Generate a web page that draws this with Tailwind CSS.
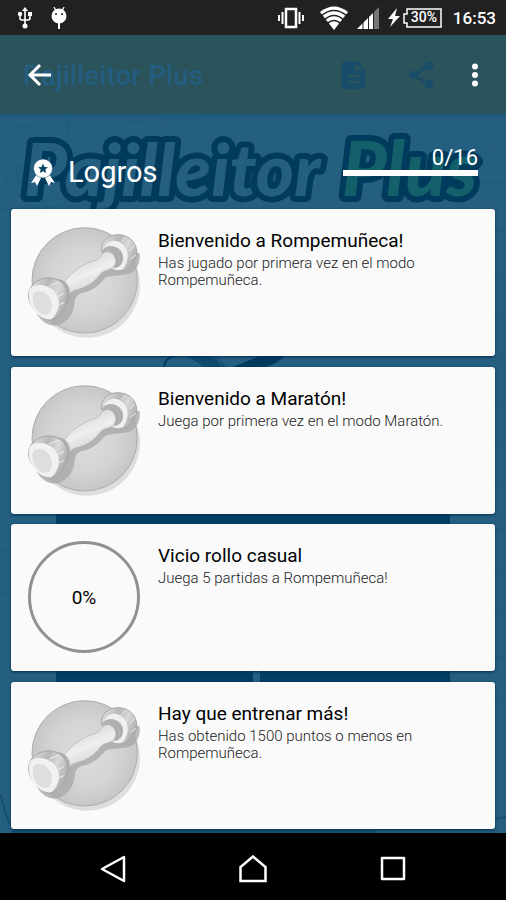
<!DOCTYPE html>
<html lang="es">
<head>
<meta charset="utf-8">
<meta name="viewport" content="width=device-width, initial-scale=1">
<title>Logros</title>
<script src="https://cdn.jsdelivr.net/npm/@tailwindcss/browser@4"></script>
</head>
<body class="bg-black font-[Roboto,sans-serif]">

<!-- Shared dumbbell badge -->
<svg class="absolute size-0" aria-hidden="true">
  <defs>
    <radialGradient id="disc" cx=".5" cy=".5" r=".55">
      <stop offset="0" stop-color="#dedede"/><stop offset=".6" stop-color="#d3d3d3"/><stop offset="1" stop-color="#c3c3c3"/>
    </radialGradient>
    <linearGradient id="metal" x1="0" y1="0" x2="1" y2=".5">
      <stop offset="0" stop-color="#e8e8e8"/><stop offset=".45" stop-color="#b8b8b8"/><stop offset=".7" stop-color="#d9d9d9"/><stop offset="1" stop-color="#b0b0b0"/>
    </linearGradient>
    <linearGradient id="grip" x1=".35" y1=".2" x2=".65" y2=".8">
      <stop offset="0" stop-color="#dcdcdc"/><stop offset=".5" stop-color="#efefef"/><stop offset="1" stop-color="#d8d8d8"/>
    </linearGradient>
  </defs>
  <symbol id="dumbbell" viewBox="54 33 336 336">
    <circle cx="231" cy="209" r="159" fill="#dedede"/>
    <circle cx="224" cy="196" r="158" fill="url(#disc)" stroke="#adadad" stroke-width="3"/>
    <path d="M80 295C95 325 125 340 155 326C180 313 192 290 194 262C196 245 204 238 216 234C250 228 270 206 286 188C302 182 330 182 350 178C375 174 392 150 389 116L340 90L180 190L90 270Z" fill="#a9a9a9" fill-opacity=".8"/>
    <path d="M274 108C272 78 296 58 326 59C358 60 381 84 380 112C379 142 358 167 328 168C306 167 300 158 300 145Z" fill="url(#metal)" stroke="#a9a9a9" stroke-width="3"/>
    <path d="M282 98C292 76 318 70 338 88C358 106 358 140 338 163C326 167 312 166 304 158C334 158 348 130 334 110C320 92 300 88 282 98Z" fill="#f0f0f0"/>
    <path d="M275 110C286 88 316 90 331 106C347 126 339 152 318 159C308 158 304 150 300 142Z" fill="#b2b2b2"/>
    <path d="M303 103C320 116 328 134 320 155M312 98C332 112 338 132 330 151" fill="none" stroke="#a0a0a0" stroke-width="2"/>
    <path d="M349 66L334 81M374 91L359 108M378 121L361 132" stroke="#ececec" stroke-width="3"/>
    <path d="M128 198C148 186 174 203 181 220C184 244 178 260 162 274Z" fill="#b0b0b0" stroke="#a1a1a1" stroke-width="2"/>
    <path d="M164 200C181 176 204 158 230 146C248 138 264 137 271 126C276 111 293 105 306 115C321 128 321 149 306 160C290 167 278 167 268 181C250 204 229 216 205 223C192 226 184 230 179 236C180 220 174 208 164 200Z" fill="url(#grip)" stroke="#b4b4b4" stroke-width="2"/>
    <path d="M68 209C88 191 110 184 134 191C156 197 174 218 173 246C172 278 151 306 123 314C101 317 62 285 56 247C55 232 59 218 68 209Z" fill="url(#metal)" stroke="#a5a5a5" stroke-width="3"/>
    <path d="M60 220C82 203 116 209 135 231C153 254 151 287 125 313C91 317 59 281 57 247C56 236 57 228 60 220Z" fill="#f1f1f1"/>
    <path d="M72 235C83 225 101 228 113 241C128 259 128 284 115 297C98 304 73 285 70 260C68 248 68 240 72 235Z" fill="#dedede" stroke="#d0d0d0" stroke-width="1"/>
    <path d="M147 201L118 213M162 236L142 245M163 262L146 270" stroke="#f1f1f1" stroke-width="3"/>
  </symbol>
</svg>

<div class="relative isolate flex min-h-screen flex-col overflow-hidden bg-[#255f80]">

  <!-- Dimmed game screen behind the achievements overlay -->
  <div class="absolute inset-0 -z-10" aria-hidden="true">
    <div class="mt-[35px] flex h-[79px] items-center bg-[#2a535c] pl-[23px] pr-[72px]">
      <span class="grow pt-[2px] text-[28px] font-medium text-[#245d80]">Pajilleitor Plus</span>
      <svg class="mr-[43px] h-7 w-6" viewBox="0 0 24 28" fill="#174d69"><path fill-rule="evenodd" d="M3 0H15L23 9V25Q23 28 20 28H3Q0 28 0 25V3Q0 0 3 0ZM13 2V10H21ZM6 14V16.500H18V14ZM6 20V22.500H18V20Z"/></svg>
      <svg class="h-7 w-[25px]" viewBox="1 0 26 28" fill="#174d69"><path d="M22 4L6 14L22 24" fill="none" stroke="#174d69" stroke-width="3"/><circle cx="22" cy="4.500" r="4.500"/><circle cx="5.500" cy="14" r="4.500"/><circle cx="22" cy="23.500" r="4.500"/></svg>
    </div>
    <div class="h-[6px] bg-linear-to-b from-[#1b587e] to-[#255f80]"></div>
    <svg class="absolute left-0 top-[114px] h-[719px] w-full" viewBox="0 0 506 719" preserveAspectRatio="none">
      <g fill="none" stroke="#1c5880" stroke-opacity=".5" stroke-width="1.500">
        <path d="M0 14L240 2M0 54L506 38M68 0V35M0 96L506 68M0 140H12M0 180H12M0 222H12M0 264H12M0 306H12M0 350H12M0 395H12M0 437H12M0 479H12M0 521H12M0 563H12"/>
        <path d="M494 117H506M494 160H506M494 202H506M494 244H506M494 288H506M494 330H506M494 372H506M494 415H506M494 457H506M494 499H506M494 543H506M494 586H506"/>
        <path d="M5 70L8 58L12 64L17 57L20 75"/>
      </g>
      <path d="M164 253C165 246 170 242 177 241" fill="none" stroke="#003b5e" stroke-width="2"/>
      <path d="M177 241H214L226 253H203Q193 243 177 241Z" fill="#0f4a6d"/>
      <path d="M211 241Q219 246 222 253" fill="none" stroke="#2a6485" stroke-width="1"/>
      <path d="M233 253L262 241H286Q277 250 266 253Z" fill="#003b5e"/>
      <path d="M56 390H450V570H260V550H253V570H56Z" fill="#003e63"/>
      <path d="M0 680C6 695 5 710 18 719M494 705L506 703" fill="none" stroke="#0b4669" stroke-opacity=".6" stroke-width="2"/>
      <path d="M12 716H376V719H12Z" fill="#164f72"/>
    </svg>
    <svg class="absolute left-0 top-[114px] h-[110px] w-full" viewBox="0 0 506 110">
      <g font-family="Lato, sans-serif" font-weight="900" font-style="italic" stroke="#003b5e" stroke-width="12" stroke-linejoin="round" paint-order="stroke">
        <text x="24" y="82" font-size="73" fill="#255f80">Pajilleitor</text>
        <text x="342" y="82" font-size="76" fill="#13606b">Plus</text>
      </g>
    </svg>
  </div>

  <!-- Status bar -->
  <div class="flex h-[35px] items-center bg-[#212121] pl-[17px] pr-[10px] text-white">
    <svg class="h-[22px] w-4" viewBox="0 0 16 22" role="img" aria-label="USB"><g fill="none" stroke="#fff" stroke-width="1.600"><path d="M8 4V19M3 8V11Q3 13 5 13H11Q13 13 13 11V8"/></g><path d="M8 0L11 4H5ZM11 5H15V9H11Z" fill="#fff"/><circle cx="3" cy="7" r="2.200" fill="#fff"/><circle cx="8" cy="19" r="2.500" fill="#fff"/></svg>
    <svg class="ml-[18px] h-[22px] w-4" viewBox="0 0 16 22" role="img" aria-label="Android"><path d="M3 0L5 4M13 0L11 4" stroke="#fff" stroke-width="1.300"/><circle cx="8" cy="9" r="7.500" fill="#fff"/><path d="M8 15V22" stroke="#fff" stroke-width="2"/><circle cx="5" cy="7" r="1" fill="#212121"/><circle cx="11" cy="7" r="1" fill="#212121"/></svg>
    <span class="grow"></span>
    <svg class="h-[22px] w-[26px]" viewBox="0 0 26 22" role="img" aria-label="Vibración" stroke="#fff" stroke-width="2" fill="none"><path stroke-width="2.500" d="M8 2H18V20H8Z"/><path d="M4.500 5V17M1 8V14M21.500 5V17M25 8V14"/></svg>
    <svg class="ml-4 h-6 w-7" viewBox="0 0 28 24" role="img" aria-label="Wi-Fi"><path d="M0 6Q14 -5 28 6L14 24Z" fill="#fff"/><path d="M1 10Q14 -1 27 10M4 14Q14 5 24 14M7 18Q14 11 21 18" stroke="#212121" stroke-width="1.500" fill="none"/></svg>
    <svg class="ml-[9px] h-[22px] w-[22px]" viewBox="0 0 22 22" role="img" aria-label="Cobertura"><path d="M0 22L17 5V22Z" fill="#fff"/><path d="M17 5L22 0V22H17Z" fill="#777"/><path d="M6 12V22M11.500 8V22M16.500 2V22" stroke="#212121"/></svg>
    <svg class="ml-[9px] h-5 w-3" viewBox="0 0 12 20" role="img" aria-label="Cargando"><path d="M9 0L0 11H5L2 19L12 8H7Z" fill="#fff"/></svg>
    <span class="relative ml-[3px] flex h-5 w-[39px] items-center justify-center">
      <svg class="absolute inset-0 h-full w-full" viewBox="0 0 39 20" aria-hidden="true"><path d="M4 1H38V19H4V15H1V6H4Z" fill="none" stroke="#fff" stroke-width="1.500"/></svg>
      <span class="pl-[3px] text-[14px] font-medium">30%</span>
    </span>
    <time class="ml-[11px] pt-[2px] text-[17px] font-medium">16:53</time>
  </div>

  <!-- Overlay toolbar -->
  <header class="flex h-[79px] items-center justify-between pl-[27px] pr-[20px]">
    <button type="button" aria-label="Volver" class="flex size-6 items-center justify-center">
      <svg class="size-6" viewBox="0 0 24 24" fill="none" stroke="#fff" stroke-width="3"><path d="M24 12H3M13 2L3 12L13 22"/></svg>
    </button>
    <button type="button" aria-label="Más opciones" class="flex h-6 w-[22px] items-center justify-center">
      <svg class="h-6 w-2" viewBox="0 0 8 24" fill="#fff"><circle cx="4" cy="3.500" r="3"/><circle cx="4" cy="12" r="3"/><circle cx="4" cy="20.500" r="3"/></svg>
    </button>
  </header>

  <main class="flex grow flex-col px-[11px] pb-1">
    <div class="flex h-[95px] items-start justify-between pl-[20px] pr-[17px] pt-[31px]">
      <div class="flex items-center pt-[10px]">
        <svg class="h-[27px] w-6" viewBox="0 0 24 27" aria-hidden="true"><path d="M6 15L0 24L4 23L6 27L11 17ZM18 15L24 24L20 23L18 27L13 17Z" fill="#fff"/><circle cx="12" cy="9.500" r="9.500" fill="#fff" stroke="#0d4669" stroke-width=".5"/><path d="M12 4.500L13.500 8L17 8.300L14.300 10.600L15.200 14L12 12.200L8.800 14L9.700 10.600L7 8.300L10.500 8Z" fill="#0d4669"/></svg>
        <h1 class="ml-[13px] text-[29px] leading-[34px] text-white">Logros</h1>
      </div>
      <div class="w-[135px]">
        <p class="text-right text-[22px] leading-[25px] text-white" id="total">0/16</p>
        <div role="progressbar" aria-labelledby="total" aria-valuemin="0" aria-valuemax="16" aria-valuenow="0" class="h-[6px] bg-white"></div>
      </div>
    </div>

    <ul class="flex grow flex-col justify-between">
      <li class="flex min-h-[147px] gap-[18px] rounded-[3px] bg-[#fafafa] px-[17px] pt-[17px] shadow-[0_1px_3px_#002d50]">
        <svg class="size-28 shrink-0" aria-hidden="true"><use href="#dumbbell"/></svg>
        <div class="pt-[2px]">
          <h2 class="text-[19px] leading-[26px] text-black">Bienvenido a Rompemuñeca!</h2>
          <p class="max-w-[300px] pt-px text-[15px] font-light leading-[17px] text-[#222]">Has jugado por primera vez en el modo Rompemuñeca.</p>
        </div>
      </li>
      <li class="flex min-h-[147px] gap-[18px] rounded-[3px] bg-[#fafafa] px-[17px] pt-[17px] shadow-[0_1px_3px_#002d50]">
        <svg class="size-28 shrink-0" aria-hidden="true"><use href="#dumbbell"/></svg>
        <div class="pt-[2px]">
          <h2 class="text-[19px] leading-[26px] text-black">Bienvenido a Maratón!</h2>
          <p class="max-w-[300px] pt-px text-[15px] font-light leading-[17px] text-[#222]">Juega por primera vez en el modo Maratón.</p>
        </div>
      </li>
      <li class="flex min-h-[147px] gap-[18px] rounded-[3px] bg-[#fafafa] px-[17px] pt-[17px] shadow-[0_1px_3px_#002d50]">
        <div role="progressbar" aria-label="Vicio rollo casual" aria-valuenow="0" class="flex size-28 shrink-0 items-center justify-center rounded-full border-3 border-[#919191] pt-[2px] text-[19px] text-black">0%</div>
        <div class="pt-[2px]">
          <h2 class="text-[19px] leading-[26px] text-black">Vicio rollo casual</h2>
          <p class="max-w-[300px] pt-px text-[15px] font-light leading-[17px] text-[#222]">Juega 5 partidas a Rompemuñeca!</p>
        </div>
      </li>
      <li class="flex min-h-[147px] gap-[18px] rounded-[3px] bg-[#fafafa] px-[17px] pt-[17px] shadow-[0_1px_3px_#002d50]">
        <svg class="size-28 shrink-0" aria-hidden="true"><use href="#dumbbell"/></svg>
        <div class="pt-[2px]">
          <h2 class="text-[19px] leading-[26px] text-black">Hay que entrenar más!</h2>
          <p class="max-w-[300px] pt-px text-[15px] font-light leading-[17px] text-[#222]">Has obtenido 1500 puntos o menos en Rompemuñeca.</p>
        </div>
      </li>
    </ul>
  </main>

  <!-- System navigation -->
  <nav class="flex h-[67px] items-center justify-around bg-black px-[43px] pt-1" aria-label="Sistema">
    <button type="button" aria-label="Atrás"><svg class="h-7 w-7" viewBox="0 0 28 28" fill="none" stroke="#fff" stroke-width="2.500" stroke-linejoin="round"><path d="M25 2V26L3 14Z"/></svg></button>
    <button type="button" aria-label="Inicio"><svg class="h-7 w-7" viewBox="0 0 28 28" fill="none" stroke="#fff" stroke-width="2.500"><path d="M1.500 26V12L14 1.500L26.500 12V26Z"/></svg></button>
    <button type="button" aria-label="Recientes"><svg class="h-7 w-7" viewBox="0 0 28 28" fill="none" stroke="#fff" stroke-width="2.500" stroke-linejoin="round"><path d="M3 3H25V24H3Z"/></svg></button>
  </nav>
</div>
</body>
</html>
